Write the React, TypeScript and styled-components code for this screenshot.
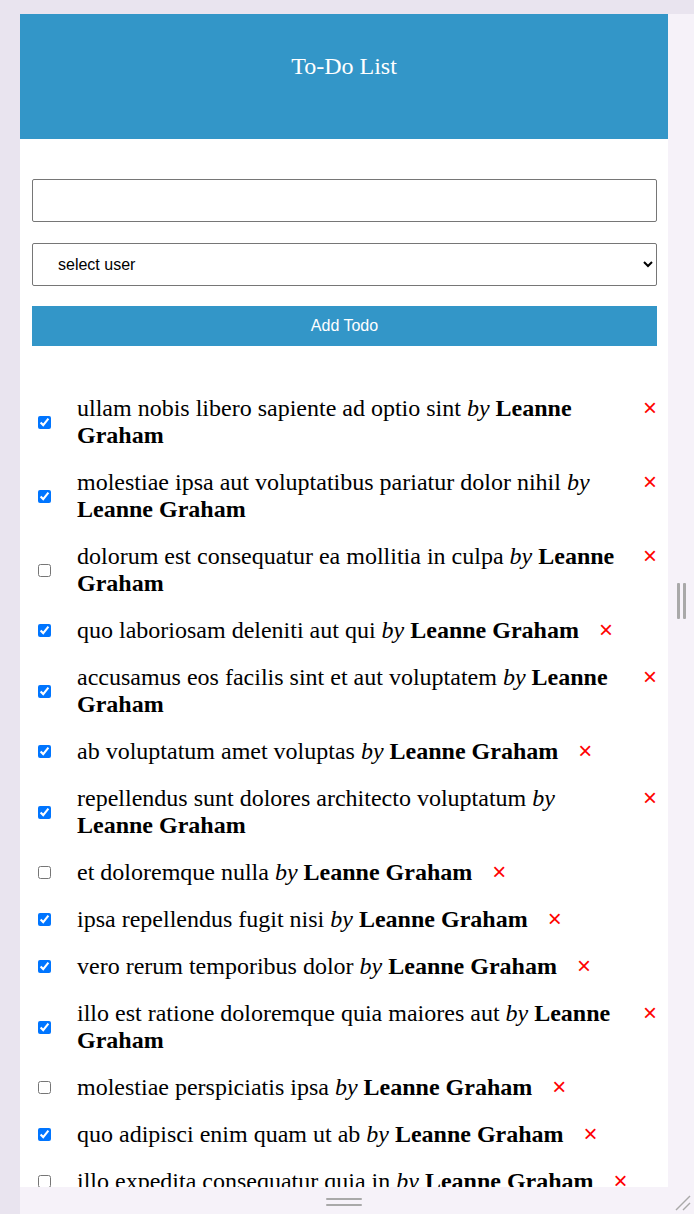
import React from "react";
import styled, { createGlobalStyle } from "styled-components";

const Global = createGlobalStyle`
  html, body { margin: 0; padding: 0; background: #e9e4ef; overflow: hidden; }
  body { font-family: "Liberation Serif", "Times New Roman", serif; }
`;

const Stage = styled.div`
  box-sizing: border-box;
  height: 1214px;
  padding: 14px 0 0 20px;
  overflow: hidden;
`;

const Frame = styled.div`
  display: grid;
  grid-template-columns: 648px 26px;
  grid-template-rows: 1173px 27px;
  background: #f6f2f9;
`;

const Viewport = styled.div`
  overflow: hidden;
  background: #ffffff;
`;

const Header = styled.header`
  box-sizing: border-box;
  height: 125px;
  padding-top: 39px;
  background: #3396c8;
  color: #ffffff;
  text-align: center;
`;

const Title = styled.h1`
  margin: 0;
  font-size: 24px;
  font-weight: normal;
  line-height: 27px;
`;

const Form = styled.form`
  display: flex;
  flex-direction: column;
  padding: 40px 11px 0 12px;
`;

const TextInput = styled.input`
  box-sizing: border-box;
  height: 43px;
  width: 100%;
  margin: 0;
  border: 1px solid #767676;
  border-radius: 2px;
  background: #fff;
  font: 16px "Liberation Sans", Arial, sans-serif;
`;

const Select = styled.select`
  box-sizing: border-box;
  height: 43px;
  width: 100%;
  margin: 21px 0 0;
  padding: 0 0 0 21px;
  border: 1px solid #767676;
  border-radius: 2px;
  background: #fff;
  color: #000;
  font: 16px "Liberation Sans", Arial, sans-serif;
`;

const AddButton = styled.button`
  height: 40px;
  width: 100%;
  margin: 20px 0 0;
  border: none;
  background: #3396c8;
  color: #ffffff;
  font: 16px "Liberation Sans", Arial, sans-serif;
`;

const List = styled.ul`
  list-style: none;
  margin: 49px 0 0;
  padding: 0 11px 0 18px;
`;

const Item = styled.li`
  display: flex;
  align-items: center;
  margin-bottom: 20px;
`;

const Check = styled.input`
  flex-shrink: 0;
  width: 13px;
  height: 13px;
  margin: 0;
`;

const Text = styled.span`
  margin-left: 26px;
  font-size: 24px;
  line-height: 27px;
  color: #000;
`;

const Remove = styled.button`
  align-self: flex-start;
  flex-shrink: 0;
  margin-left: 17px;
  padding: 0 0 0 3px;
  border: none;
  background: none;
  color: #ff0000;
  font: 24px/26px "Liberation Sans", Arial, sans-serif;
`;

const SideRail = styled.div`
  display: flex;
  align-items: center;
  justify-content: center;
  gap: 3px;
`;

const VBar = styled.span`
  width: 3px;
  height: 36px;
  border-radius: 1px;
  background: #a9a9a9;
`;

const BottomRail = styled.div`
  display: flex;
  flex-direction: column;
  align-items: center;
  justify-content: center;
  gap: 4px;
  padding-top: 3px;
`;

const HBar = styled.span`
  width: 36px;
  height: 2px;
  border-radius: 1px;
  background: #a9a9a9;
`;

const Corner = styled.div`
  display: flex;
  align-items: flex-end;
  justify-content: flex-end;
  padding: 0 3px 3px 0;
`;

type Todo = { title: string; done: boolean };

const todos: Todo[] = [
  { title: "ullam nobis libero sapiente ad optio sint", done: true },
  { title: "molestiae ipsa aut voluptatibus pariatur dolor nihil", done: true },
  { title: "dolorum est consequatur ea mollitia in culpa", done: false },
  { title: "quo laboriosam deleniti aut qui", done: true },
  { title: "accusamus eos facilis sint et aut voluptatem", done: true },
  { title: "ab voluptatum amet voluptas", done: true },
  { title: "repellendus sunt dolores architecto voluptatum", done: true },
  { title: "et doloremque nulla", done: false },
  { title: "ipsa repellendus fugit nisi", done: true },
  { title: "vero rerum temporibus dolor", done: true },
  { title: "illo est ratione doloremque quia maiores aut", done: true },
  { title: "molestiae perspiciatis ipsa", done: false },
  { title: "quo adipisci enim quam ut ab", done: true },
  { title: "illo expedita consequatur quia in", done: false },
  { title: "qui ullam ratione quibusdam voluptatem quia omnis", done: false },
  { title: "laboriosam mollitia et enim quasi adipisci quia provident illum", done: false },
];

export default function App() {
  return (
    <>
      <Global />
      <Stage>
        <Frame>
          <Viewport>
            <Header>
              <Title>To-Do List</Title>
            </Header>
            <Form onSubmit={(e) => e.preventDefault()}>
              <TextInput type="text" />
              <Select defaultValue="">
                <option value="">select user</option>
                <option value="1">Leanne Graham</option>
              </Select>
              <AddButton type="submit">Add Todo</AddButton>
            </Form>
            <List>
              {todos.map((t, i) => (
                <Item key={i}>
                  <Check type="checkbox" defaultChecked={t.done} />
                  <Text>
                    {t.title} <i>by</i> <b>Leanne Graham</b>
                  </Text>
                  <Remove type="button">×</Remove>
                </Item>
              ))}
            </List>
          </Viewport>
          <SideRail>
            <VBar />
            <VBar />
          </SideRail>
          <BottomRail>
            <HBar />
            <HBar />
          </BottomRail>
          <Corner>
            <svg width="17" height="17" viewBox="0 0 17 17">
              <line x1="16" y1="2" x2="2" y2="16" stroke="#a9a9a9" strokeWidth="1.5" />
              <line x1="16" y1="9" x2="9" y2="16" stroke="#a9a9a9" strokeWidth="1.5" />
            </svg>
          </Corner>
        </Frame>
      </Stage>
    </>
  );
}
